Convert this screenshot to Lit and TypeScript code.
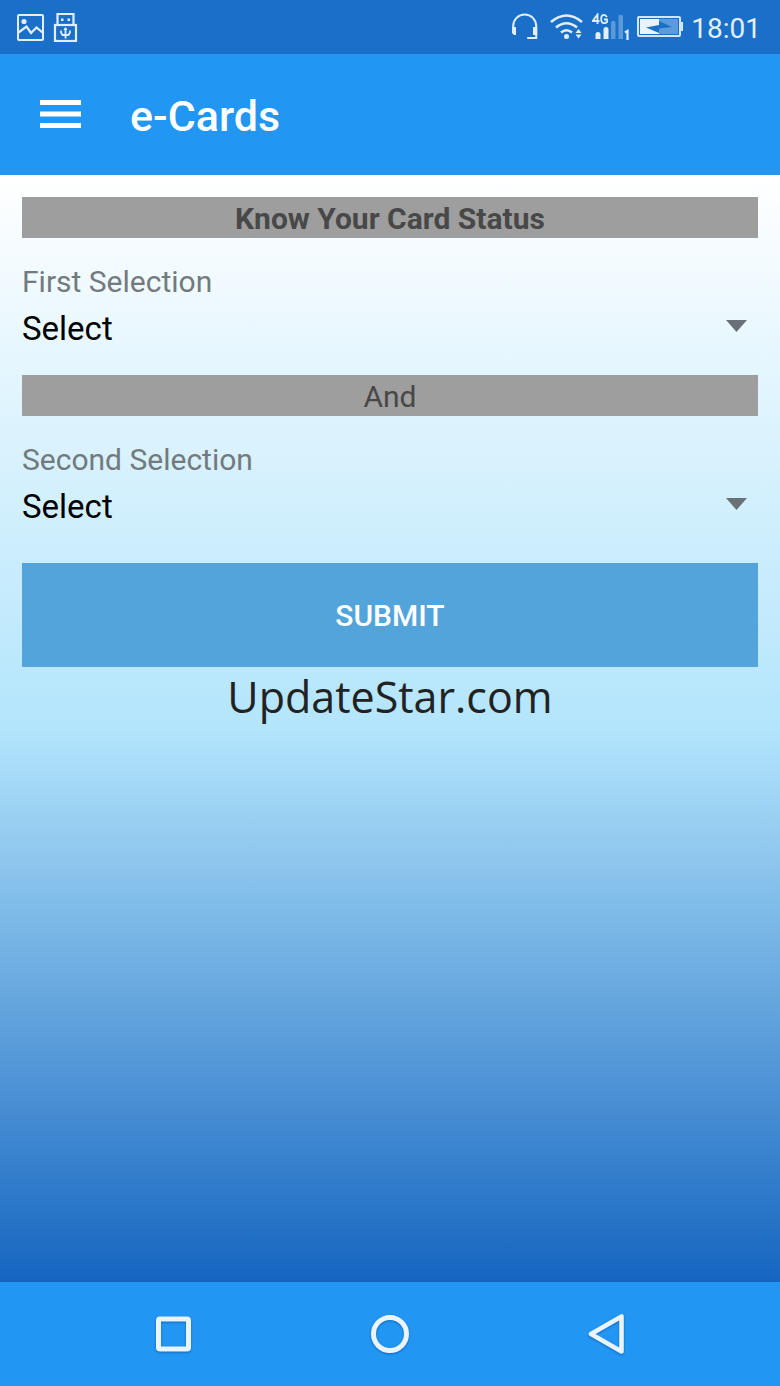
import { LitElement, html, css } from "lit";
import { customElement, property, state } from "lit/decorators.js";

@customElement("status-bar")
class StatusBar extends LitElement {
  @property() time = "";

  static styles = css`
    :host {
      display: flex;
      align-items: center;
      justify-content: space-between;
      height: 54px;
      padding: 0 19px 0 16px;
      background: #1a70c8;
      color: #e3eefa;
    }
    .group {
      display: flex;
      align-items: center;
      gap: 8px;
    }
    svg {
      display: block;
    }
    .time {
      font-size: 28px;
      line-height: 54px;
      padding-top: 2px;
      box-sizing: border-box;
      height: 54px;
    }
  `;

  render() {
    return html`
      <div class="group">
        <svg width="28" height="28" viewBox="0 0 28 28" fill="none" stroke="currentColor" aria-label="Screenshot saved">
          <rect x="2" y="2" width="25" height="25" rx="1" stroke-width="2" />
          <circle cx="8" cy="8.500" r="2.600" fill="currentColor" stroke="none" />
          <path d="M2.500 19.500l8-6 4.500 6.500 5.500-5.500 6 5" stroke-width="2.200" />
        </svg>
        <svg width="26" height="30" viewBox="0 0 26 30" fill="none" stroke="currentColor" aria-label="USB connected">
          <path d="M7 12V2h16v10" transform="translate(-1.500 0)" stroke-width="2.200" />
          <rect x="3" y="13" width="21" height="16" stroke-width="2.200" />
          <path d="M9 6.500h2.500V9H9zM15.500 6.500H18V9h-2.500z" fill="currentColor" stroke="none" />
          <path d="M13.500 16v10.500M9 18.500v2l1.500 2.500h6l1.500-2.500v-2" stroke-width="1.800" />
          <path d="M11.500 18l2-3 2 3z" fill="currentColor" stroke="none" />
        </svg>
      </div>
      <div class="group">
        <svg width="31" height="28" viewBox="0 0 31 28" fill="none" stroke="currentColor" aria-label="Headset">
          <path d="M2.200 16v-3a11.500 11.500 0 0 1 23 0v12h-9" stroke-width="2" />
          <path d="M1 14h4v8H3L1 20zM22 14h4.200v8H22z" fill="currentColor" stroke="none" />
        </svg>
        <svg width="34" height="28" viewBox="0 0 34 28" fill="none" stroke="currentColor" aria-label="Wi-Fi">
          <path d="M1 9q15.500-13 31 0M6 14.500q10.500-8.500 21 0M11 19.500q5.500-4.500 11 0" stroke-width="2.600" />
          <circle cx="16.500" cy="23.500" r="2.500" fill="currentColor" stroke="none" />
          <path d="M25.500 20l3-4 3 4zM25.500 21.500l3 4 3-4z" fill="currentColor" stroke="none" />
        </svg>
        <svg width="37" height="28" viewBox="0 0 37 28" fill="none" stroke="currentColor" aria-label="4G signal">
          <path d="M5.500 11V1.500L.800 8h6.700M15 4Q13.500 1.800 12 1.800 9.200 1.800 9.200 6T12 10.200Q13.800 10.200 15 9V6.500h-3" stroke-width="1.800" />
          <path d="M3.500 21.500a2.500 2.500 0 0 1 5 0V26h-5zM11.500 16.500a2.500 2.500 0 0 1 5 0V26h-5z" fill="currentColor" stroke="none" />
          <path d="M19 10a2.200 2.200 0 0 1 4.500 0v16H19zM26.500 4a2.200 2.200 0 0 1 4.500 0v22h-4.500z" fill="#5b9ad9" stroke="none" />
          <path d="M33 19.500l2.500-1.500v9" stroke-width="2.200" />
        </svg>
        <svg width="46" height="22" viewBox="0 0 46 22" aria-label="Battery charging">
          <path d="M43 6h3v9h-3z" fill="#d4e5f7" />
          <rect x="1" y="1" width="42" height="19" rx="1" fill="#1a70c8" stroke="#d4e5f7" stroke-width="2" />
          <path d="M3 3h19v15H3z" fill="#e8f3fc" />
          <path d="M22 3h19v15H22z" fill="#5a9bdc" />
          <path d="M9 11.500l13-2.500v8z" fill="#1a70c8" />
          <path d="M22 5l13 6-13 1.500z" fill="#1a70c8" />
        </svg>
        <span class="time">${this.time}</span>
      </div>
    `;
  }
}

@customElement("app-bar")
class AppBar extends LitElement {
  @property() heading = "";

  static styles = css`
    :host {
      display: flex;
      align-items: center;
      gap: 49px;
      height: 121px;
      padding: 0 40px;
      background: #2196f3;
      color: #fff;
    }
    .menu {
      padding: 0;
      border: 0;
      background: none;
      color: inherit;
    }
    svg {
      display: block;
    }
    .heading {
      margin: 0;
      padding-top: 2px;
      font-size: 43px;
      line-height: 50px;
      font-weight: 500;
    }
  `;

  render() {
    return html`
      <button class="menu" aria-label="Open menu">
        <svg width="41" height="30" viewBox="0 0 41 30" fill="currentColor">
          <path d="M0 0h41v5H0zM0 11.500h41v5H0zM0 23h41v5H0z" />
        </svg>
      </button>
      <h1 class="heading">${this.heading}</h1>
    `;
  }
}

@customElement("select-field")
class SelectField extends LitElement {
  @property() label = "";

  static styles = css`
    :host {
      display: block;
    }
    .label {
      display: block;
      margin-bottom: 2px;
      font-size: 30px;
      line-height: 40px;
      color: #737a7e;
    }
    .control {
      display: grid;
      align-items: center;
    }
    .select {
      grid-area: 1 / 1;
      width: 100%;
      height: 48px;
      padding: 0;
      border: 0;
      border-radius: 0;
      appearance: none;
      background: transparent;
      color: #000;
      font: inherit;
      font-size: 33px;
    }
    .arrow {
      grid-area: 1 / 1;
      justify-self: end;
      margin-right: 11px;
      margin-bottom: 4px;
      pointer-events: none;
    }
  `;

  render() {
    return html`
      <label class="label" for="choice">${this.label}</label>
      <div class="control">
        <select class="select" id="choice">
          <option>Select</option>
        </select>
        <svg class="arrow" width="21" height="12" viewBox="0 0 21 12" fill="#697176" aria-hidden="true">
          <path d="M0 0h21L10.500 12z" />
        </svg>
      </div>
    `;
  }
}

@customElement("nav-bar")
class NavBar extends LitElement {
  static styles = css`
    :host {
      display: flex;
      justify-content: center;
      align-items: center;
      gap: 172px;
      height: 104px;
      background: #2196f3;
    }
    .key {
      padding: 0;
      border: 0;
      background: none;
      color: #eaf4fe;
    }
    .icon {
      display: block;
      filter: drop-shadow(0 1px 1px rgba(0, 60, 130, 0.5));
    }
  `;

  render() {
    return html`
      <button class="key" aria-label="Recent apps">
        <svg class="icon" width="45" height="44" viewBox="0 0 45 44" fill="none" stroke="currentColor" stroke-width="5">
          <rect x="7.500" y="7" width="30" height="30" rx="1.500" />
        </svg>
      </button>
      <button class="key" aria-label="Home">
        <svg class="icon" width="45" height="44" viewBox="0 0 45 44" fill="none" stroke="currentColor" stroke-width="5">
          <circle cx="22" cy="22" r="16.500" />
        </svg>
      </button>
      <button class="key" aria-label="Back">
        <svg class="icon" width="45" height="44" viewBox="0 0 45 44" fill="none" stroke="currentColor" stroke-width="4.600" stroke-linejoin="round">
          <path d="M36.500 4.500v35L6 22z" />
        </svg>
      </button>
    `;
  }
}

@customElement("app-root")
class AppRoot extends LitElement {
  @state() private time = "18:01";

  static styles = css`
    :host {
      display: flex;
      flex-direction: column;
      min-height: 100vh;
      font-family: Roboto, "Liberation Sans", sans-serif;
    }
    .page {
      flex: 1;
      padding: 22px;
      background: linear-gradient(#fff, #b3e5fc 50%, #1565c0);
    }
    .form {
      display: flex;
      flex-direction: column;
    }
    .band {
      margin: 0;
      background: #9e9e9e;
      color: #484848;
      font-size: 30px;
      line-height: 43px;
      height: 41px;
      font-weight: 400;
      text-align: center;
    }
    .title {
      font-weight: 700;
    }
    .field {
      margin: 24px 0 23px;
    }
    .submit {
      height: 104px;
      margin-top: 10px;
      padding: 0;
      border: 0;
      background: #52a4db;
      color: #fff;
      font: inherit;
      font-size: 30px;
      font-weight: 500;
    }
    .credit {
      margin: 0;
      font-family: "Open Sans", "Noto Sans", sans-serif;
      font-size: 43px;
      line-height: 60px;
      text-align: center;
      color: #222;
    }
  `;

  render() {
    return html`
      <status-bar time=${this.time}></status-bar>
      <app-bar heading="e-Cards"></app-bar>
      <main class="page">
        <form class="form" @submit=${(e: Event) => e.preventDefault()}>
          <h2 class="band title">Know Your Card Status</h2>
          <select-field class="field" label="First Selection"></select-field>
          <p class="band">And</p>
          <select-field class="field" label="Second Selection"></select-field>
          <button class="submit">SUBMIT</button>
        </form>
        <p class="credit">UpdateStar.com</p>
      </main>
      <nav-bar></nav-bar>
    `;
  }
}
